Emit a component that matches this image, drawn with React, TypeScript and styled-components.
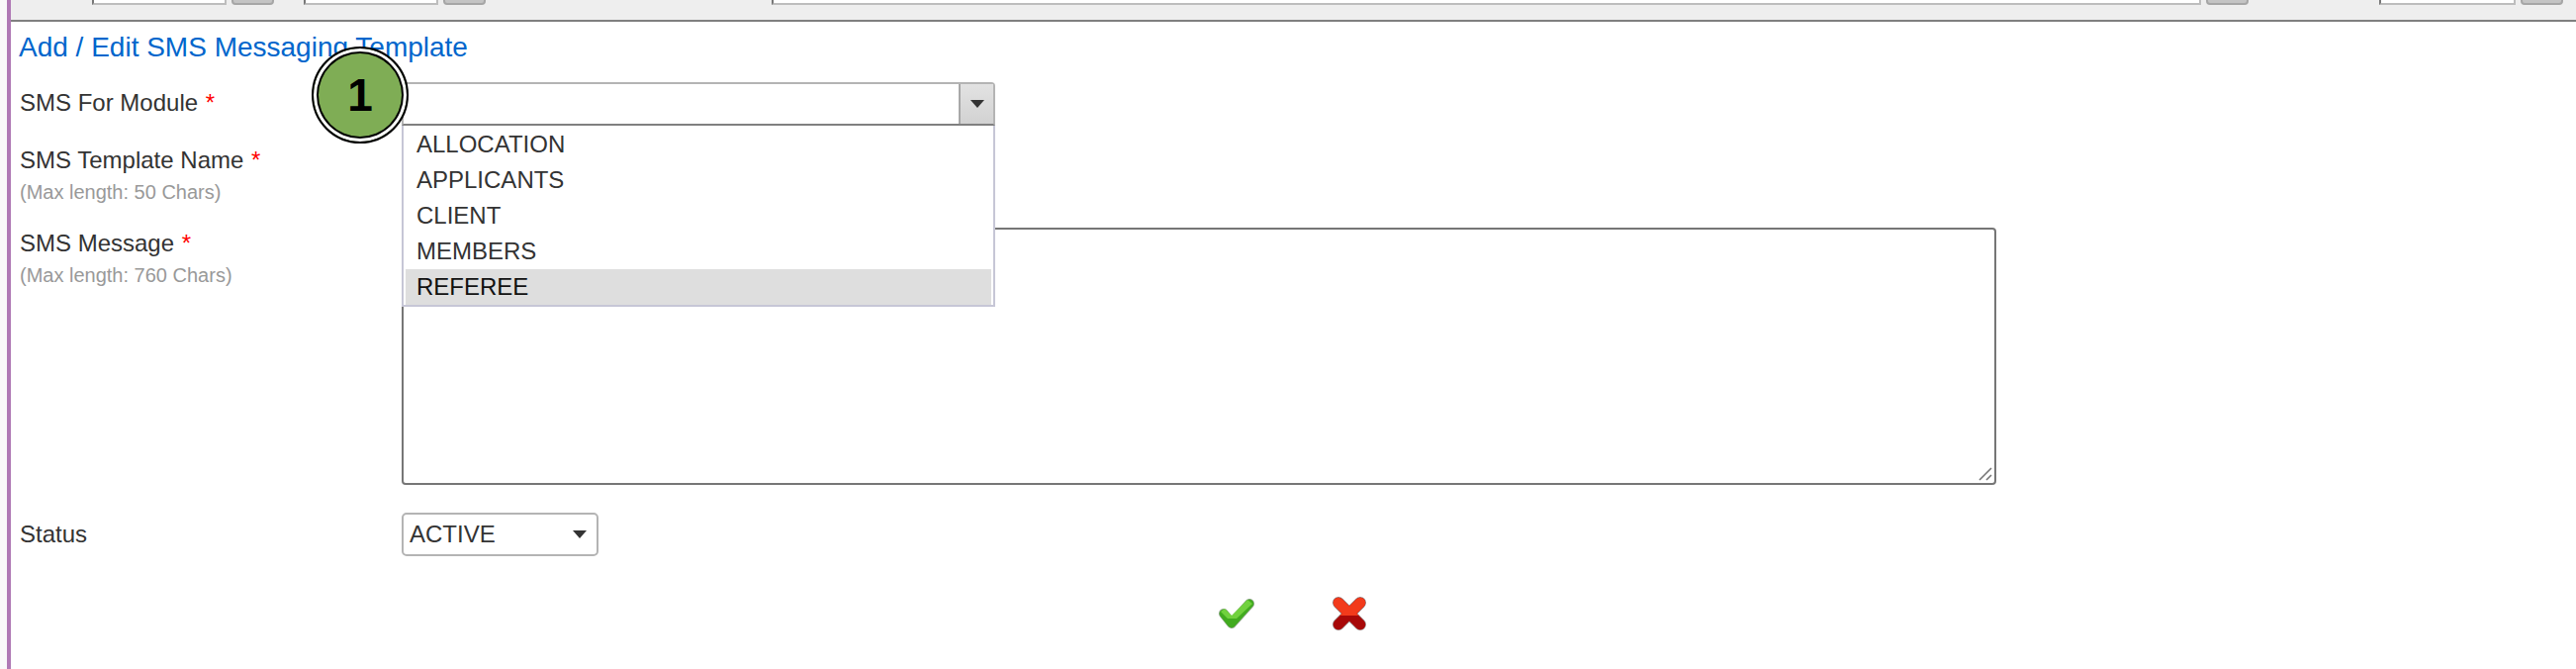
import React from 'react';
import styled, { createGlobalStyle } from 'styled-components';

const GlobalStyle = createGlobalStyle`
  html, body {
    margin: 0;
    padding: 0;
    background: #fff;
  }
  body {
    font-family: 'Liberation Sans', Arial, sans-serif;
    color: #333;
  }
`;

const Page = styled.div`
  display: flex;
  width: 2604px;
  height: 676px;
  overflow: hidden;
  background: #fafafa;
  padding-left: 7px;
  box-sizing: border-box;
`;

const Main = styled.div`
  flex: 1;
  border-left: 4px solid #b07ab5;
  background: #fff;
`;

const Toolbar = styled.div`
  display: flex;
  align-items: flex-end;
  height: 5px;
  padding: 0 0 15px 82px;
  background: #eee;
  border-bottom: 2px solid #808080;
  overflow: hidden;
`;

const ToolInput = styled.div<{ $width: number; $gap: number }>`
  flex: none;
  width: ${(p) => p.$width}px;
  height: 30px;
  margin-left: ${(p) => p.$gap}px;
  box-sizing: border-box;
  background: #fff;
  border: 2px solid #bdbdbd;
  border-top-color: #777;
  border-left-color: #777;
`;

const ToolButton = styled.div`
  flex: none;
  width: 43px;
  height: 30px;
  margin-left: 5px;
  box-sizing: border-box;
  background: #c4c4c4;
  border: 2px solid #a6a6a6;
  border-radius: 4px;
`;

const Form = styled.div`
  position: relative;
  padding-left: 9px;
`;

const Title = styled.h1`
  margin: 0 0 0 -1px;
  height: 61px;
  padding-top: 12px;
  box-sizing: border-box;
  font-size: 28px;
  line-height: 28px;
  font-weight: normal;
  color: #0066cc;
`;

const Row = styled.div<{ $gap?: number }>`
  display: grid;
  grid-template-columns: 386px auto;
  justify-content: start;
  margin-top: ${(p) => p.$gap ?? 0}px;
`;

const Label = styled.div<{ $top?: number }>`
  padding-top: ${(p) => p.$top ?? 2}px;
  font-size: 24px;
  line-height: 28px;
  color: #333;
`;

const Required = styled.span`
  color: #f00;
  margin-left: 1px;
`;

const Hint = styled.div`
  margin-top: 6px;
  font-size: 20px;
  line-height: 24px;
  color: #999;
`;

const ComboWrap = styled.div`
  position: relative;
  width: 600px;
`;

const Combo = styled.div`
  display: flex;
  height: 44px;
  box-sizing: border-box;
  background: #fff;
  border: 2px solid #b4b4b4;
  border-bottom-color: #808080;
  border-radius: 4px 4px 0 0;
`;

const ComboField = styled.div`
  flex: 1;
`;

const ComboButton = styled.div`
  display: flex;
  align-items: center;
  justify-content: center;
  width: 33px;
  background: linear-gradient(#e2e2e2, #d2d2d2);
  border-left: 2px solid #a8a8a8;
`;

const DropList = styled.ul`
  position: absolute;
  top: 100%;
  left: 0;
  width: 100%;
  z-index: 3;
  margin: 0;
  padding: 1px 2px 0;
  box-sizing: border-box;
  list-style: none;
  background: #fff;
  border: 2px solid #c6c6d6;
  border-top: 0;
`;

const DropItem = styled.li<{ $active?: boolean }>`
  height: 36px;
  padding-left: 11px;
  font-size: 24px;
  line-height: 36px;
  color: ${(p) => (p.$active ? '#111' : '#333')};
  background: ${(p) => (p.$active ? '#dedede' : 'transparent')};
`;

const TextField = styled.div`
  width: 600px;
  height: 44px;
  box-sizing: border-box;
  border: 2px solid #767676;
  border-radius: 4px;
  background: #fff;
`;

const MessageBox = styled.div`
  position: relative;
  width: 1612px;
  height: 260px;
  box-sizing: border-box;
  background: #fff;
  border: 2px solid #767676;
  border-radius: 4px;
`;

const Grip = styled.svg`
  position: absolute;
  right: 1px;
  bottom: 1px;
`;

const StatusSelect = styled.div`
  display: flex;
  align-items: center;
  justify-content: space-between;
  width: 199px;
  height: 44px;
  padding: 0 9px 0 6px;
  box-sizing: border-box;
  font-size: 24px;
  color: #333;
  background: #fff;
  border: 2px solid #b4b4b4;
  border-radius: 5px;
`;

const Actions = styled.div`
  display: flex;
  justify-content: center;
  gap: 78px;
  margin-top: 41px;
  padding-right: 10px;
`;

const ActionIcon = styled.svg`
  display: block;
`;

const Badge = styled.div`
  position: absolute;
  left: 304px;
  top: 25px;
  z-index: 5;
  display: flex;
  align-items: center;
  justify-content: center;
  width: 98px;
  height: 98px;
  box-sizing: border-box;
  border-radius: 50%;
  background: #7fad55;
  border: 2px solid #000;
  box-shadow: inset 0 0 0 3px #fff, inset 0 0 0 5px #000;
  font-size: 46px;
  font-weight: bold;
  line-height: 1;
  color: #000;
`;

const Caret = () => (
  <svg width="16" height="10" viewBox="0 0 16 10">
    <path d="M1 1h14L8 9z" fill="#333" />
  </svg>
);

const modules = ['ALLOCATION', 'APPLICANTS', 'CLIENT', 'MEMBERS', 'REFEREE'];

export default function App() {
  return (
    <>
      <GlobalStyle />
      <Page>
        <Main>
          <Toolbar>
            <ToolInput $width={136} $gap={0} />
            <ToolButton />
            <ToolInput $width={136} $gap={30} />
            <ToolButton />
            <ToolInput $width={1445} $gap={289} />
            <ToolButton />
            <ToolInput $width={138} $gap={132} />
            <ToolButton />
          </Toolbar>

          <Form>
            <Title>Add / Edit SMS Messaging Template</Title>
            <Badge>1</Badge>

            <Row>
              <Label $top={7}>
                SMS For Module <Required>*</Required>
              </Label>
              <ComboWrap>
                <Combo>
                  <ComboField />
                  <ComboButton>
                    <Caret />
                  </ComboButton>
                </Combo>
                <DropList>
                  {modules.map((m) => (
                    <DropItem key={m} $active={m === 'REFEREE'}>
                      {m}
                    </DropItem>
                  ))}
                </DropList>
              </ComboWrap>
            </Row>

            <Row $gap={19}>
              <Label>
                SMS Template Name <Required>*</Required>
                <Hint>(Max length: 50 Chars)</Hint>
              </Label>
              <TextField />
            </Row>

            <Row $gap={24}>
              <Label>
                SMS Message <Required>*</Required>
                <Hint>(Max length: 760 Chars)</Hint>
              </Label>
              <MessageBox>
                <Grip width="16" height="16" viewBox="0 0 16 16">
                  <path d="M2 14L14 2M9 14l5-5" stroke="#767676" strokeWidth="1.6" fill="none" />
                </Grip>
              </MessageBox>
            </Row>

            <Row $gap={28}>
              <Label $top={8}>Status</Label>
              <StatusSelect>
                ACTIVE
                <Caret />
              </StatusSelect>
            </Row>

            <Actions>
              <ActionIcon width="36" height="34" viewBox="0 0 36 34">
                <path d="M5 17l8 10L31 7" stroke="#8fa58a" strokeWidth="10" strokeLinejoin="round" strokeLinecap="round" fill="none" />
                <path d="M5 17l8 10L31 7" stroke="#41ab1f" strokeWidth="8.5" strokeLinejoin="round" strokeLinecap="round" fill="none" />
                <path d="M2 15l4-3 7 7L29 3l5 4-16 15-9 0z" fill="#71d13e" />
              </ActionIcon>
              <ActionIcon width="36" height="34" viewBox="0 0 36 34">
                <defs>
                  <clipPath id="xTop">
                    <rect x="0" y="0" width="36" height="19" />
                  </clipPath>
                </defs>
                <path d="M7 6l22 22M29 6L7 28" stroke="#9a8a8a" strokeWidth="12" strokeLinecap="round" fill="none" />
                <path d="M7 6l22 22M29 6L7 28" stroke="#a80808" strokeWidth="10.5" strokeLinecap="round" fill="none" />
                <path d="M7 6l22 22M29 6L7 28" stroke="#f23a1b" strokeWidth="10.5" strokeLinecap="round" fill="none" clipPath="url(#xTop)" />
              </ActionIcon>
            </Actions>
          </Form>
        </Main>
      </Page>
    </>
  );
}
